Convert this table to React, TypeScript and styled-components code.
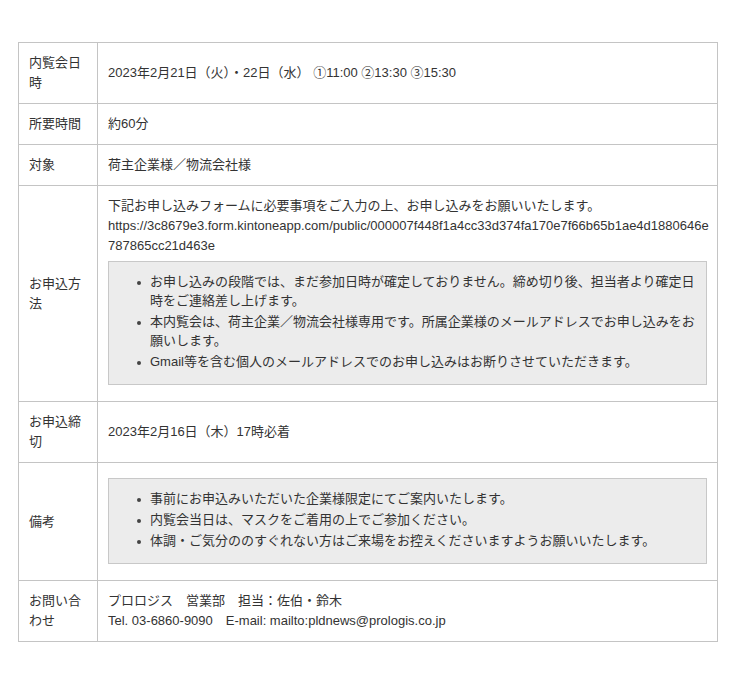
import styled, { createGlobalStyle } from "styled-components"

const GlobalStyle = createGlobalStyle`
  body {
    margin: 0;
    background: #fff;
    font-family: "Liberation Sans", "Noto Sans CJK JP", sans-serif;
    color: #333;
  }
`

const Page = styled.main`
  padding: 42px 0 40px 18px;
`

const Table = styled.table`
  width: 700px;
  border-collapse: collapse;
  table-layout: fixed;
  font-size: 13px;
  line-height: 20px;
`

const Label = styled.th`
  width: 58px;
  padding: 10px;
  border: 1px solid #c4c4c4;
  font-weight: normal;
  text-align: left;
  vertical-align: middle;
`

const Cell = styled.td`
  padding: 10px;
  border: 1px solid #c4c4c4;
  vertical-align: middle;
`

const Url = styled.div`
  white-space: nowrap;
`

const NoteBox = styled.div`
  margin: 5px 0 6px;
  padding: 10px 10px 11px 41px;
  background: #ececec;
  border: 1px solid #c8c8c8;
`

const NoteList = styled.ul`
  margin: 0;
  padding: 0;
  list-style: none;
`

const NoteItem = styled.li`
  position: relative;
  margin-bottom: 2px;
  line-height: 19px;

  &::before {
    content: "";
    position: absolute;
    left: -13px;
    top: 9px;
    width: 4px;
    height: 4px;
    border-radius: 50%;
    background: #444;
  }
`

interface RowType {
  label: string
  body: React.ReactNode
}

const Notes = ({ items }: { items: string[] }) => (
  <NoteBox>
    <NoteList>
      {items.map((text, index) => (
        <NoteItem key={`note${index}`}>{text}</NoteItem>
      ))}
    </NoteList>
  </NoteBox>
)

const rows: RowType[] = [
  { label: "内覧会日時", body: "2023年2月21日（火）・22日（水） ①11:00 ②13:30 ③15:30" },
  { label: "所要時間", body: "約60分" },
  { label: "対象", body: "荷主企業様／物流会社様" },
  {
    label: "お申込方法",
    body: (
      <>
        <div>下記お申し込みフォームに必要事項をご入力の上、お申し込みをお願いいたします。</div>
        <Url>
          https://3c8679e3.form.kintoneapp.com/public/000007f448f1a4cc33d374fa170e7f66b65b1ae4d1880646e
          <br />
          787865cc21d463e
        </Url>
        <Notes
          items={[
            "お申し込みの段階では、まだ参加日時が確定しておりません。締め切り後、担当者より確定日時をご連絡差し上げます。",
            "本内覧会は、荷主企業／物流会社様専用です。所属企業様のメールアドレスでお申し込みをお願いします。",
            "Gmail等を含む個人のメールアドレスでのお申し込みはお断りさせていただきます。",
          ]}
        />
      </>
    ),
  },
  { label: "お申込締切", body: "2023年2月16日（木）17時必着" },
  {
    label: "備考",
    body: (
      <Notes
        items={[
          "事前にお申込みいただいた企業様限定にてご案内いたします。",
          "内覧会当日は、マスクをご着用の上でご参加ください。",
          "体調・ご気分ののすぐれない方はご来場をお控えくださいますようお願いいたします。",
        ]}
      />
    ),
  },
  {
    label: "お問い合わせ",
    body: (
      <>
        <div>プロロジス　営業部　担当：佐伯・鈴木</div>
        <div>Tel. 03-6860-9090　E-mail: mailto:pldnews@prologis.co.jp</div>
      </>
    ),
  },
]

export default function App() {
  return (
    <Page>
      <GlobalStyle />
      <Table>
        <tbody>
          {rows.map((row, index) => (
            <tr key={`row${index}`}>
              <Label>{row.label}</Label>
              <Cell>{row.body}</Cell>
            </tr>
          ))}
        </tbody>
      </Table>
    </Page>
  )
}
